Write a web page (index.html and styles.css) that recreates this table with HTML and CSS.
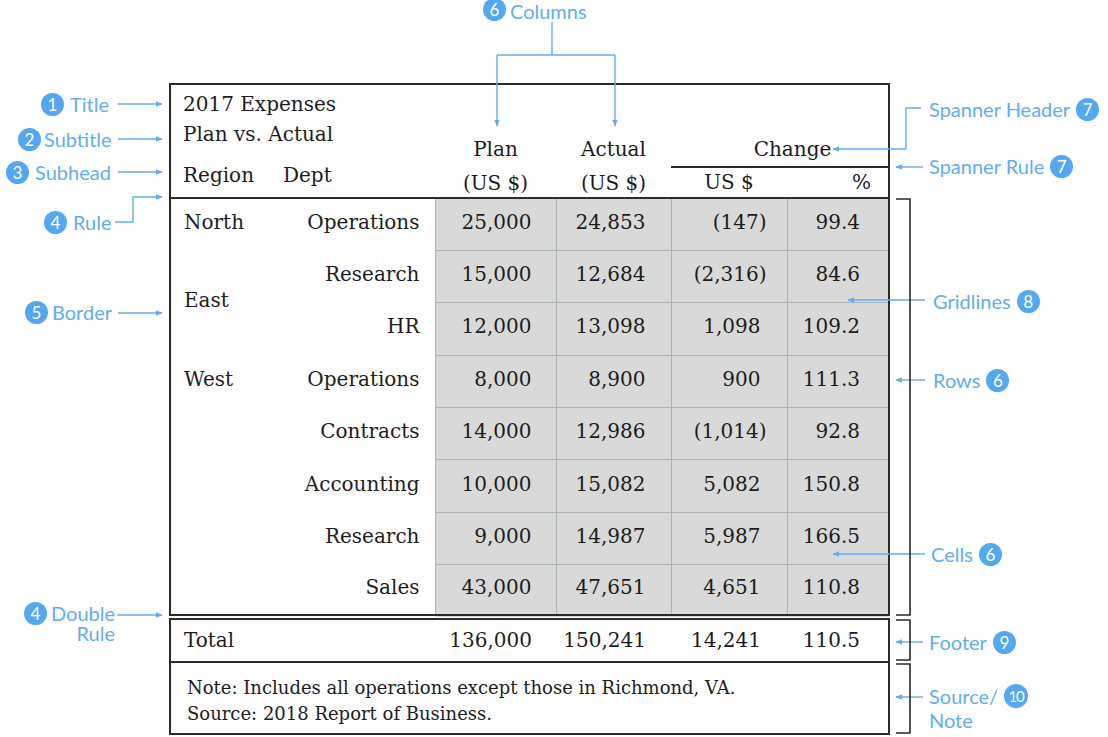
FILE: index.html
```html
<!DOCTYPE html>
<html lang="en">
<head>
<meta charset="utf-8">
<title>Table anatomy</title>
<link rel="stylesheet" href="styles.css">
</head>
<body>
<div class="page">
  <table class="tbl">
    <colgroup>
      <col class="c1"><col class="c2"><col class="c3"><col class="c4"><col class="c5"><col class="c6">
    </colgroup>
    <thead>
      <tr class="head">
        <th colspan="2" class="stub">
          <div class="title">2017 Expenses</div>
          <div class="subtitle">Plan vs. Actual</div>
          <div class="subhead"><span class="sh-region">Region</span><span>Dept</span></div>
        </th>
        <th class="colhead"><div class="ch-name">Plan</div><div class="ch-unit">(US $)</div></th>
        <th class="colhead"><div class="ch-name">Actual</div><div class="ch-unit">(US $)</div></th>
        <th colspan="2" class="spanner">
          <div class="spanner-title">Change</div>
          <div class="spanner-sub"><span class="s-us">US $</span><span class="s-pct">%</span></div>
        </th>
      </tr>
    </thead>
    <tbody>
      <tr><td class="reg">North</td><td class="dept">Operations</td><td class="num n3">25,000</td><td class="num n4">24,853</td><td class="num n5 neg">(147)</td><td class="num n6">99.4</td></tr>
      <tr><td class="reg east" rowspan="2">East</td><td class="dept">Research</td><td class="num n3">15,000</td><td class="num n4">12,684</td><td class="num n5 neg">(2,316)</td><td class="num n6">84.6</td></tr>
      <tr><td class="dept">HR</td><td class="num n3">12,000</td><td class="num n4">13,098</td><td class="num n5">1,098</td><td class="num n6">109.2</td></tr>
      <tr><td class="reg">West</td><td class="dept">Operations</td><td class="num n3">8,000</td><td class="num n4">8,900</td><td class="num n5">900</td><td class="num n6">111.3</td></tr>
      <tr><td class="reg"></td><td class="dept">Contracts</td><td class="num n3">14,000</td><td class="num n4">12,986</td><td class="num n5 neg">(1,014)</td><td class="num n6">92.8</td></tr>
      <tr><td class="reg"></td><td class="dept">Accounting</td><td class="num n3">10,000</td><td class="num n4">15,082</td><td class="num n5">5,082</td><td class="num n6">150.8</td></tr>
      <tr><td class="reg"></td><td class="dept">Research</td><td class="num n3">9,000</td><td class="num n4">14,987</td><td class="num n5">5,987</td><td class="num n6">166.5</td></tr>
      <tr class="last"><td class="reg"></td><td class="dept">Sales</td><td class="num n3">43,000</td><td class="num n4">47,651</td><td class="num n5">4,651</td><td class="num n6">110.8</td></tr>
    </tbody>
    <tfoot>
      <tr class="total"><td colspan="2" class="tot-label">Total</td><td class="tnum n3">136,000</td><td class="tnum n4">150,241</td><td class="tnum n5">14,241</td><td class="tnum n6">110.5</td></tr>
      <tr class="note"><td colspan="6"><div>Note: Includes all operations except those in Richmond, VA.</div><div>Source: 2018 Report of Business.</div></td></tr>
    </tfoot>
  </table>

  <svg class="lines" width="1108" height="737" viewBox="0 0 1108 737" aria-hidden="true">
    <defs>
      <marker id="ah" viewBox="0 0 10 10" refX="9" refY="5" markerWidth="5" markerHeight="5" orient="auto">
        <path d="M0 1 L10 5 L0 9 Z" fill="#62adf0"/>
      </marker>
    </defs>
    <g fill="none" stroke="#62adf0" stroke-width="1.4" marker-end="url(#ah)">
      <path d="M118 104 H162"/>
      <path d="M118 139 H162"/>
      <path d="M118 172 H162"/>
      <path d="M115 222 H133 V197 H162"/>
      <path d="M118 313 H162"/>
      <path d="M117 615 H162"/>
      <path d="M497 55 V126"/>
      <path d="M615 55 V126"/>
      <path d="M921 108 H906 V149 H833"/>
      <path d="M923 167 H896"/>
      <path d="M925 300 H848"/>
      <path d="M925 380 H896"/>
      <path d="M925 554 H833"/>
      <path d="M923 642 H896"/>
      <path d="M923 697 H896"/>
    </g>
    <g fill="none" stroke="#62adf0" stroke-width="1.4">
      <path d="M552 22 V55"/>
      <path d="M497 55 H615"/>
    </g>
    <g fill="none" stroke="#2a2a2a" stroke-width="1.6">
      <path d="M896 199 H910 V615 H896"/>
      <path d="M896 620 H910 V660 H896"/>
      <path d="M896 664 H910 V733 H896"/>
    </g>
  </svg>

  <div class="callout co-title"><span class="badge">1</span><span class="ctext">Title</span></div>
  <div class="callout co-subtitle"><span class="badge">2</span><span class="ctext">Subtitle</span></div>
  <div class="callout co-subhead"><span class="badge">3</span><span class="ctext">Subhead</span></div>
  <div class="callout co-rule"><span class="badge">4</span><span class="ctext">Rule</span></div>
  <div class="callout co-border"><span class="badge">5</span><span class="ctext">Border</span></div>
  <div class="callout co-double"><span class="badge">4</span><span class="ctext two right">Double<br>Rule</span></div>
  <div class="callout co-columns"><span class="badge">6</span><span class="ctext">Columns</span></div>
  <div class="callout co-sphead"><span class="ctext">Spanner Header</span><span class="badge">7</span></div>
  <div class="callout co-sprule"><span class="ctext">Spanner Rule</span><span class="badge">7</span></div>
  <div class="callout co-grid"><span class="ctext">Gridlines</span><span class="badge">8</span></div>
  <div class="callout co-rows"><span class="ctext">Rows</span><span class="badge">6</span></div>
  <div class="callout co-cells"><span class="ctext">Cells</span><span class="badge">6</span></div>
  <div class="callout co-footer"><span class="ctext">Footer</span><span class="badge">9</span></div>
  <div class="callout co-source"><span class="ctext two tall">Source/<br>Note</span><span class="badge b10">10</span></div>
</div>
</body>
</html>
```

FILE: styles.css
```css
* { box-sizing: border-box; }

html, body {
  margin: 0;
  padding: 0;
  background: #ffffff;
}

.page {
  position: relative;
  width: 1108px;
  height: 737px;
  overflow: hidden;
  padding-top: 83px;
  padding-left: 169px;
}

/* ---------- table ---------- */
.tbl {
  width: 719px;
  table-layout: fixed;
  border-collapse: collapse;
  border: 2px solid #2b2b2b;
  font-family: "DejaVu Serif", "Liberation Serif", serif;
  font-size: 20px;
  color: #1c1c1c;
}

.c1 { width: 114px; }
.c2 { width: 151px; }
.c3 { width: 121px; }
.c4 { width: 115px; }
.c5 { width: 116px; }
.c6 { width: 102px; }

th, td { padding: 0; font-weight: normal; }

.head { height: 114px; }
.head th { border-bottom: 2px solid #2b2b2b; vertical-align: bottom; }

.stub {
  text-align: left;
  vertical-align: top !important;
  padding: 4px 0 0 12px !important;
}
.title, .subtitle { line-height: 30px; }
.subhead {
  display: flex;
  margin-top: 11px;
  line-height: 30px;
}
.sh-region { width: 100px; }

.colhead { text-align: center; }
.ch-name { line-height: 28px; margin-bottom: 6px; }
.ch-unit { line-height: 28px; }

.spanner { padding: 0; }
.spanner-title {
  line-height: 28px;
  text-align: center;
  padding-left: 26px;
  margin-bottom: 3px;
}
.spanner-sub {
  display: flex;
  border-top: 2px solid #2b2b2b;
  line-height: 29px;
}
.s-us { width: 116px; text-align: center; }
.s-pct { flex: 1; text-align: right; padding-right: 17px; }

tbody tr { height: 52.4px; }
tbody td { padding-bottom: 5px; }

.reg { text-align: left; padding-left: 13px; vertical-align: middle; }
.dept { text-align: right; padding-right: 15px; }

.num {
  background: #d9d9d9;
  border: 1px solid #a9b4b9;
  text-align: right;
}
.n3 { padding-right: 24px; }
.n4 { padding-right: 25px; }
.n5 { padding-right: 26px; }
.n5.neg { padding-right: 20px; }
.n6 { padding-right: 28px; }

tbody tr:first-child td { border-top: none; }
tbody td.num:last-child { border-right: none; }

.total { height: 45px; border-top: 6px double #2b2b2b; border-bottom: 2px solid #2b2b2b; }
.total td { padding-bottom: 2px; }
.tot-label { padding-left: 13px; text-align: left; }
.tnum { text-align: right; }

.note td {
  padding: 12px 0 6px 16px;
  font-size: 18px;
  line-height: 26px;
}

/* ---------- callouts ---------- */
.lines {
  position: absolute;
  left: 0;
  top: 0;
  pointer-events: none;
}

.callout {
  position: absolute;
  display: flex;
  align-items: center;
  gap: 6px;
  font-family: Lato, "Noto Sans", sans-serif;
  font-size: 20px;
  line-height: 24px;
  color: #62adf0;
  white-space: nowrap;
}

.badge {
  display: inline-flex;
  align-items: center;
  justify-content: center;
  width: 23px;
  height: 23px;
  border-radius: 50%;
  background: #55a7f2;
  color: #ffffff;
  font-size: 17px;
  line-height: 1;
  flex: none;
}
.b10 { font-size: 15px; letter-spacing: -1px; width: 24px; height: 24px; }

.ctext.two { line-height: 20px; }
.ctext.two.tall { line-height: 24px; }
.ctext.right { text-align: right; }

.co-title { left: 41px; top: 92px; }
.co-subtitle { left: 18px; top: 127px; gap: 3px; }
.co-subhead { left: 6px; top: 160px; }
.co-rule { left: 44px; top: 210px; }
.co-border { left: 25px; top: 300px; gap: 4px; }
.co-double { left: 24px; top: 603px; align-items: flex-start; gap: 4px; }
.co-double .badge { margin-top: -1px; }
.co-columns { left: 483px; top: 1px; gap: 4px; line-height: 20px; }
.co-columns .badge { margin-top: -4px; }
.co-sphead { left: 929px; top: 97px; }
.co-sprule { left: 929px; top: 154px; }
.co-grid { left: 933px; top: 289px; }
.co-rows { left: 933px; top: 368px; }
.co-cells { left: 931px; top: 542px; }
.co-footer { left: 929px; top: 630px; }
.co-source { left: 929px; top: 684px; align-items: flex-start; }
.co-source .badge { margin-top: 0; }
```
